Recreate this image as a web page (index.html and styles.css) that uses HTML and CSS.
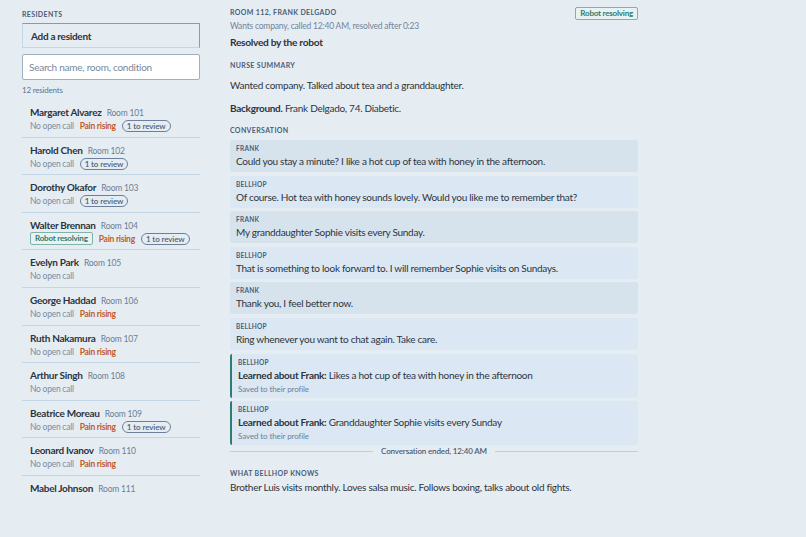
FILE: index.html
```html
<html>
  <head>
    <meta charset="UTF-8" />
    <title>Residents</title>
    <link rel="stylesheet" href="styles.css">
  </head>
  <body>
    <div class="page">
      <div class="sidebar">
        <div class="label">Residents</div>
        <button class="add">Add a resident</button>
        <input class="search" type="text" placeholder="Search name, room, condition" />
        <div class="count">12 residents</div>
        <div class="list">
          <div class="resident">
            <div class="name">Margaret Alvarez <span class="room">Room 101</span></div>
            <div class="tags"><span class="muted">No open call</span><span class="pain">Pain rising</span><span class="pill">1 to review</span></div>
          </div>
          <div class="resident">
            <div class="name">Harold Chen <span class="room">Room 102</span></div>
            <div class="tags"><span class="muted">No open call</span><span class="pill">1 to review</span></div>
          </div>
          <div class="resident">
            <div class="name">Dorothy Okafor <span class="room">Room 103</span></div>
            <div class="tags"><span class="muted">No open call</span><span class="pill">1 to review</span></div>
          </div>
          <div class="resident">
            <div class="name">Walter Brennan <span class="room">Room 104</span></div>
            <div class="tags"><span class="robot">Robot resolving</span><span class="pain">Pain rising</span><span class="pill">1 to review</span></div>
          </div>
          <div class="resident">
            <div class="name">Evelyn Park <span class="room">Room 105</span></div>
            <div class="tags"><span class="muted">No open call</span></div>
          </div>
          <div class="resident">
            <div class="name">George Haddad <span class="room">Room 106</span></div>
            <div class="tags"><span class="muted">No open call</span><span class="pain">Pain rising</span></div>
          </div>
          <div class="resident">
            <div class="name">Ruth Nakamura <span class="room">Room 107</span></div>
            <div class="tags"><span class="muted">No open call</span><span class="pain">Pain rising</span></div>
          </div>
          <div class="resident">
            <div class="name">Arthur Singh <span class="room">Room 108</span></div>
            <div class="tags"><span class="muted">No open call</span></div>
          </div>
          <div class="resident">
            <div class="name">Beatrice Moreau <span class="room">Room 109</span></div>
            <div class="tags"><span class="muted">No open call</span><span class="pain">Pain rising</span><span class="pill">1 to review</span></div>
          </div>
          <div class="resident">
            <div class="name">Leonard Ivanov <span class="room">Room 110</span></div>
            <div class="tags"><span class="muted">No open call</span><span class="pain">Pain rising</span></div>
          </div>
          <div class="resident last">
            <div class="name">Mabel Johnson <span class="room">Room 111</span></div>
          </div>
        </div>
      </div>

      <div class="main">
        <div class="head">
          <div>
            <div class="label">Room 112, Frank Delgado</div>
            <div class="sub">Wants company, called 12:40 AM, resolved after 0:23</div>
          </div>
          <span class="robot">Robot resolving</span>
        </div>
        <div class="resolved">Resolved by the robot</div>
        <div class="label summary-label">Nurse summary</div>
        <p class="text">Wanted company. Talked about tea and a granddaughter.</p>
        <p class="text"><b>Background.</b> Frank Delgado, 74. Diabetic.</p>
        <div class="label convo-label">Conversation</div>
        <div class="convo">
          <div class="msg frank"><div class="who">Frank</div><div class="said">Could you stay a minute? I like a hot cup of tea with honey in the afternoon.</div></div>
          <div class="msg bot"><div class="who">Bellhop</div><div class="said">Of course. Hot tea with honey sounds lovely. Would you like me to remember that?</div></div>
          <div class="msg frank"><div class="who">Frank</div><div class="said">My granddaughter Sophie visits every Sunday.</div></div>
          <div class="msg bot"><div class="who">Bellhop</div><div class="said">That is something to look forward to. I will remember Sophie visits on Sundays.</div></div>
          <div class="msg frank"><div class="who">Frank</div><div class="said">Thank you, I feel better now.</div></div>
          <div class="msg bot"><div class="who">Bellhop</div><div class="said">Ring whenever you want to chat again. Take care.</div></div>
          <div class="msg bot learned"><div class="who">Bellhop</div><div class="said"><b>Learned about Frank:</b> Likes a hot cup of tea with honey in the afternoon</div><div class="saved">Saved to their profile</div></div>
          <div class="msg bot learned"><div class="who">Bellhop</div><div class="said"><b>Learned about Frank:</b> Granddaughter Sophie visits every Sunday</div><div class="saved">Saved to their profile</div></div>
        </div>
        <div class="ended"><span>Conversation ended, 12:40 AM</span></div>
        <div class="label knows-label">What Bellhop knows</div>
        <p class="text knows">Brother Luis visits monthly. Loves salsa music. Follows boxing, talks about old fights.</p>
      </div>
    </div>
  </body>
</html>
```

FILE: styles.css
```css
html, body {
  margin: 0; padding: 0; height: 100%; overflow: hidden;
}
body {
  background-color: #e6edf2; color: #2c3441;
  font-family: Lato, "Noto Sans", sans-serif; font-size: 10px;
  letter-spacing: -0.28px;
}
.page {
  display: flex; align-items: flex-start; gap: 30px;
  padding: 8px 0 0 22px;
}
.label {
  font-size: 7px; line-height: 10px; font-weight: bold; letter-spacing: 0.05em;
  text-transform: uppercase; color: #4b5d79;
}

/* sidebar */
.sidebar { width: 178px; flex: none; margin-top: 1px; }
.sidebar > .label { margin-bottom: 4px; }
.add {
  display: block; width: 178px; height: 25px; text-align: left;
  padding: 0 0 0 8px; font: inherit; font-weight: bold; letter-spacing: -0.3px;
  color: #2c3441; background-color: #e6edf2;
  border: 1px solid #c5d6e4; border-top-color: #8d99a7; border-right-color: #8d99a7;
}
.search {
  display: block; width: 178px; height: 26px; margin-top: 6px;
  padding: 0 6px; font: inherit; letter-spacing: -0.25px; color: #2c3441;
  background-color: #fff; border: 1px solid #9eafc2; border-radius: 2px;
  box-sizing: border-box;
}
.search::placeholder { color: #77879b; }
.count { font-size: 8px; line-height: 11px; letter-spacing: -0.2px; color: #5e7390; margin: 5px 0 4px; }
.resident {
  padding: 5px 8px 3.6px;
  border-bottom: 1px solid #c3d6e6;
}
.resident.last { border-bottom: none; }
.name { height: 14px; font-weight: bold; line-height: 14px; letter-spacing: -0.3px; white-space: nowrap; }
.room { font-weight: normal; font-size: 8.5px; color: #6a7e97; margin-left: 3px; letter-spacing: -0.2px; }
.tags {
  display: flex; align-items: center; gap: 6px; white-space: nowrap;
  height: 14px; font-size: 8.5px; letter-spacing: -0.25px;
}
.muted { color: #7a8ca3; }
.pain { color: #c35a2c; font-weight: bold; }
.pill {
  border: 1px solid #6d809b; border-radius: 8px; padding: 0 4px;
  line-height: 10px; font-size: 8px; color: #4b5d79; font-weight: 600;
  letter-spacing: -0.1px;
}
.robot {
  border: 1px solid #7fb2a9; border-radius: 2px; padding: 0 4px;
  line-height: 11px; font-size: 8px; font-weight: bold; color: #2f7b6c;
  letter-spacing: -0.2px; background-color: #e9f2f2;
}

/* main column */
.main { width: 408px; flex: none; margin-top: -1px; }
.head { display: flex; justify-content: space-between; align-items: flex-start; }
.head .robot { margin-top: 0; }
.sub { font-size: 8.5px; line-height: 12px; letter-spacing: -0.2px; color: #71839b; margin-top: 3px; }
.resolved { font-weight: bold; font-size: 10.2px; line-height: 15px; letter-spacing: -0.3px; margin-top: 3px; }
.summary-label { margin-top: 10px; }
.convo-label { margin-top: 9px; }
.text { margin: 8px 0 0; line-height: 15px; }
.text + .text { margin-top: 8px; }
.convo { display: flex; flex-direction: column; gap: 3.6px; margin-top: 5px; }
.msg { padding: 4px 6px 3px; border-radius: 2px; }
.msg.frank { background-color: #d7e3ec; }
.msg.bot { background-color: #dbe8f3; }
.msg.learned { border-left: 2px solid #2f7d6e; padding-left: 6px; padding-bottom: 3px; }
.who {
  font-size: 6.5px; font-weight: bold; letter-spacing: 0.04em;
  text-transform: uppercase; color: #4b5d79; line-height: 10px;
}
.said { line-height: 15px; }
.saved { font-size: 8px; line-height: 12px; letter-spacing: -0.1px; color: #6a7e97; }
.ended {
  display: flex; align-items: center; gap: 8px; margin-top: 0;
  font-size: 8px; line-height: 12px; letter-spacing: -0.15px;
  font-weight: 600; color: #4b5d79;
}
.ended::before, .ended::after {
  content: ""; flex: 1; border-top: 1px solid #b9cfe2;
}
.knows-label { margin-top: 11px; }
.knows { margin-top: 2px; }
```
